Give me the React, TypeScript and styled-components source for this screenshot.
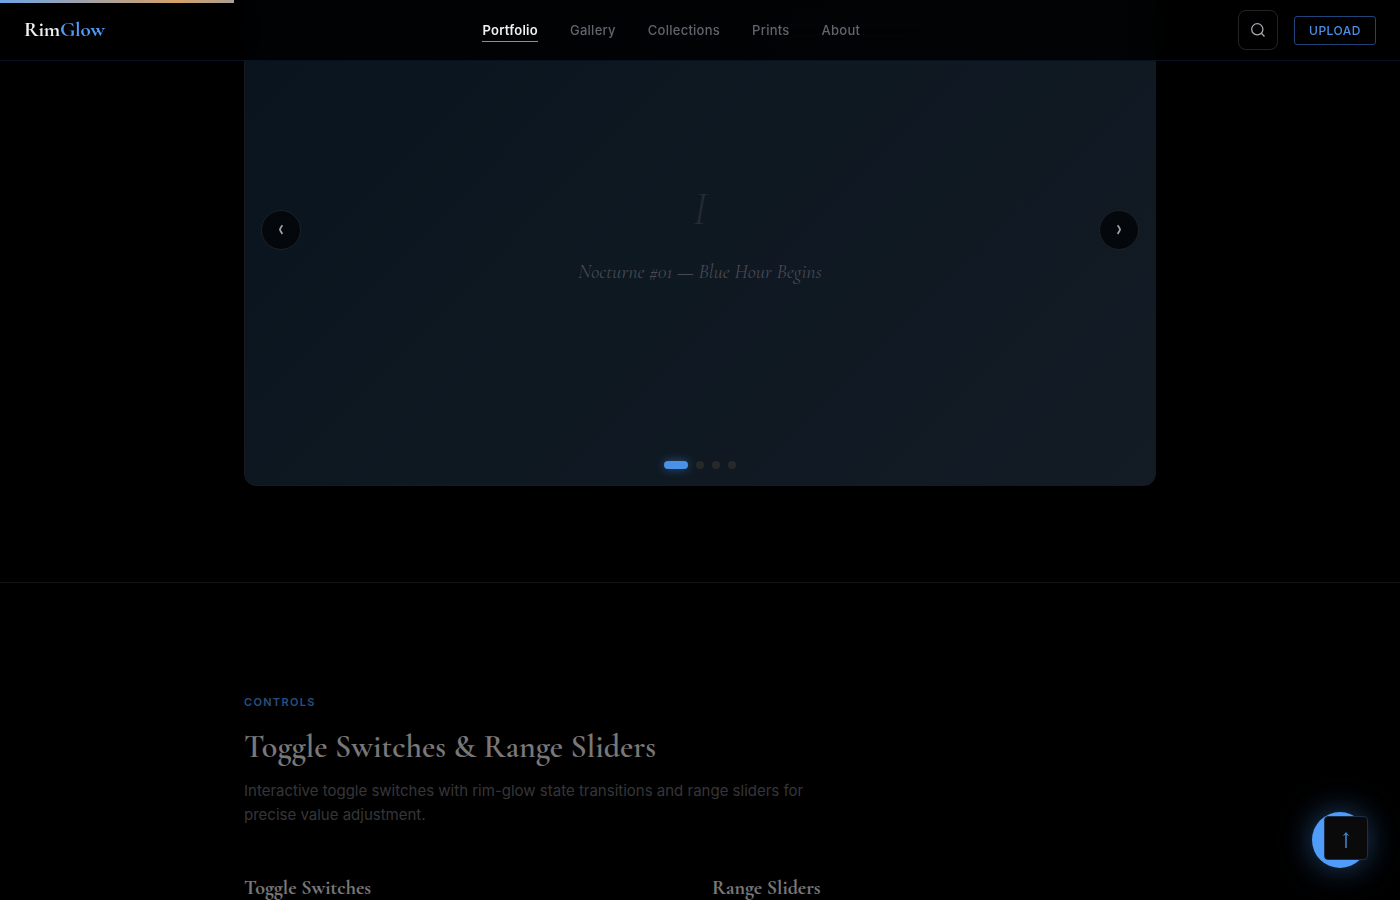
import React, { useState } from "react";
import styled, { createGlobalStyle } from "styled-components";

const serif = `"Cormorant Garamond", "Liberation Serif", serif`;
const blue = "#4f9cf9";

const GlobalStyle = createGlobalStyle`
  *, *::before, *::after { box-sizing: border-box; }
  body {
    margin: 0;
    background: #000;
    color: #f0f0f0;
    font-family: Inter, sans-serif;
    -webkit-font-smoothing: antialiased;
  }
  h2, h3, p { margin: 0; }
  button { font-family: inherit; padding: 0; cursor: pointer; }
`;

const Progress = styled.div`
  position: fixed;
  top: 0;
  left: 0;
  z-index: 20;
  width: 16.7%;
  height: 3px;
  background: linear-gradient(90deg, #6ea4e6, #d4a068 75%, #aaa094);
`;

const Header = styled.header`
  position: fixed;
  top: 0;
  left: 0;
  right: 0;
  z-index: 10;
  display: flex;
  align-items: center;
  justify-content: space-between;
  height: 61px;
  padding: 0 24px;
  background: rgba(0, 0, 0, 0.88);
  backdrop-filter: blur(20px);
  border-bottom: 1px solid #07111f;
`;

const Logo = styled.a`
  font-family: ${serif};
  font-size: 21px;
  font-weight: 700;
  line-height: 28px;
  letter-spacing: -0.01em;
  color: #f0f0f0;
  text-decoration: none;
  span { color: ${blue}; }
`;

const Nav = styled.nav`
  display: flex;
  gap: 32px;
`;

const NavLink = styled.a<{ $active?: boolean }>`
  padding: 4px 0 3px;
  border-bottom: 1px solid ${(p) => (p.$active ? blue : "transparent")};
  font-size: 13px;
  line-height: 16px;
  font-weight: ${(p) => (p.$active ? 600 : 500)};
  letter-spacing: 0.02em;
  color: ${(p) => (p.$active ? "#f0f0f0" : "#63636b")};
  text-decoration: none;
`;

const Actions = styled.div`
  display: flex;
  align-items: center;
  gap: 16px;
`;

const SearchButton = styled.button`
  display: grid;
  place-items: center;
  width: 40px;
  height: 40px;
  border: 1px solid #242424;
  border-radius: 8px;
  background: transparent;
  color: #a8a8b0;
`;

const UploadButton = styled.button`
  width: 82px;
  height: 29px;
  border: 1px solid #204478;
  border-radius: 3px;
  background: transparent;
  color: #4a90e8;
  font-size: 12px;
  font-weight: 500;
  letter-spacing: 0.04em;
`;

const Section = styled.section<{ $first?: boolean }>`
  padding: ${(p) => (p.$first ? "0 24px 96px" : "110px 24px 0")};
  margin-top: ${(p) => (p.$first ? "-27px" : "0")};
  border-bottom: ${(p) => (p.$first ? "1px solid #141416" : "none")};
`;

const Container = styled.div<{ $faded?: boolean }>`
  max-width: 912px;
  margin: 0 auto;
  opacity: ${(p) => (p.$faded ? 0.5 : 1)};
`;

const Carousel = styled.div`
  position: relative;
  display: flex;
  flex-direction: column;
  align-items: center;
  justify-content: center;
  aspect-ratio: 16 / 9;
  border: 1px solid #171a1d;
  border-radius: 12px;
  background: linear-gradient(135deg, #09131e 0%, #0e1821 45%, #131b25 100%);
`;

const Numeral = styled.div`
  font-family: ${serif};
  font-size: 48px;
  font-style: italic;
  font-weight: 300;
  line-height: 74px;
  color: #252a34;
`;

const Caption = styled.p`
  margin-top: 10px;
  font-family: ${serif};
  font-size: 20px;
  font-style: italic;
  line-height: 32px;
  color: #474852;
`;

const Arrow = styled.button<{ $side: "left" | "right" }>`
  position: absolute;
  top: 50%;
  ${(p) => p.$side}: 16px;
  display: grid;
  place-items: center;
  transform: translateY(-50%);
  width: 40px;
  height: 40px;
  border: 1px solid #1e2124;
  border-radius: 50%;
  background: #04080d;
  color: #a0a0a8;
`;

const Dots = styled.div`
  position: absolute;
  left: 0;
  right: 0;
  bottom: 16px;
  display: flex;
  justify-content: center;
  gap: 8px;
`;

const Dot = styled.button<{ $active: boolean }>`
  width: ${(p) => (p.$active ? 24 : 8)}px;
  height: 8px;
  border: 0;
  border-radius: 4px;
  background: ${(p) => (p.$active ? "#4a92e8" : "#282828")};
  box-shadow: ${(p) => (p.$active ? "0 0 10px rgba(79, 156, 249, 0.45)" : "none")};
`;

const Eyebrow = styled.p`
  font-size: 11px;
  font-weight: 600;
  line-height: 18px;
  letter-spacing: 0.12em;
  text-transform: uppercase;
  color: ${blue};
`;

const Title = styled.h2`
  margin-top: 16px;
  font-family: ${serif};
  font-size: 32px;
  font-weight: 600;
  line-height: 40px;
  color: #f0f0f0;
`;

const Lead = styled.p`
  max-width: 560px;
  margin-top: 12px;
  font-size: 15px;
  line-height: 24px;
  color: #6b6b73;
`;

const Columns = styled.div`
  display: grid;
  grid-template-columns: 1fr 1fr;
  gap: 24px;
  margin-top: 48px;
`;

const ColumnTitle = styled.h3`
  font-family: ${serif};
  font-size: 20px;
  font-weight: 700;
  line-height: 26px;
  color: #f0f0f0;
`;

const FloatingAction = styled.button`
  position: fixed;
  right: 32px;
  bottom: 32px;
  width: 56px;
  height: 56px;
  border: 0;
  border-radius: 50%;
  background: ${blue};
  box-shadow: 0 0 30px rgba(79, 156, 249, 0.4), 0 0 60px rgba(79, 156, 249, 0.1);
`;

const BackToTop = styled.button`
  position: fixed;
  right: 32px;
  bottom: 40px;
  display: grid;
  place-items: center;
  width: 44px;
  height: 44px;
  border: 1px solid #1b3048;
  border-radius: 4px;
  background: #0a0a0a;
  color: #3f7fca;
`;

const Chevron = ({ d }: { d: string }) => (
  <svg width="6" height="12" viewBox="0 0 6 12" fill="none" stroke="currentColor" strokeWidth="1.8">
    <path d={d} />
  </svg>
);

const links = ["Portfolio", "Gallery", "Collections", "Prints", "About"];
const slides = [
  { numeral: "I", caption: "Nocturne #01 — Blue Hour Begins" },
  { numeral: "II", caption: "Nocturne #02" },
  { numeral: "III", caption: "Nocturne #03" },
  { numeral: "IV", caption: "Nocturne #04" },
];

export default function App() {
  const [current, setCurrent] = useState(0);
  const step = (by: number) =>
    setCurrent((current + by + slides.length) % slides.length);

  return (
    <>
      <GlobalStyle />
      <Progress />
      <Header>
        <Logo href="#">Rim<span>Glow</span></Logo>
        <Nav>
          {links.map((label, i) => (
            <NavLink key={label} href="#" $active={i === 0}>{label}</NavLink>
          ))}
        </Nav>
        <Actions>
          <SearchButton aria-label="Search">
            <svg width="16" height="16" viewBox="0 0 16 16" fill="none" stroke="currentColor" strokeWidth="1.3">
              <circle cx="7.3" cy="7.3" r="5.6" />
              <path d="M11.3 11.3L14.5 14.5" />
            </svg>
          </SearchButton>
          <UploadButton>UPLOAD</UploadButton>
        </Actions>
      </Header>
      <main>
        <Section $first>
          <Container>
            <Carousel>
              <Numeral>{slides[current].numeral}</Numeral>
              <Caption>{slides[current].caption}</Caption>
              <Arrow $side="left" aria-label="Previous slide" onClick={() => step(-1)}>
                <Chevron d="M4.4 1.3Q2.6 3.6 1.9 5.5Q2.6 7.6 4.4 9.9" />
              </Arrow>
              <Arrow $side="right" aria-label="Next slide" onClick={() => step(1)}>
                <Chevron d="M1.6 1.3Q3.4 3.6 4.1 5.5Q3.4 7.6 1.6 9.9" />
              </Arrow>
              <Dots>
                {slides.map((slide, i) => (
                  <Dot
                    key={slide.numeral}
                    $active={i === current}
                    aria-label={`Slide ${i + 1}`}
                    onClick={() => setCurrent(i)}
                  />
                ))}
              </Dots>
            </Carousel>
          </Container>
        </Section>
        <Section>
          <Container $faded>
            <Eyebrow>Controls</Eyebrow>
            <Title>Toggle Switches &amp; Range Sliders</Title>
            <Lead>
              Interactive toggle switches with rim-glow state transitions and range
              sliders for precise value adjustment.
            </Lead>
            <Columns>
              <ColumnTitle>Toggle Switches</ColumnTitle>
              <ColumnTitle>Range Sliders</ColumnTitle>
            </Columns>
          </Container>
        </Section>
      </main>
      <FloatingAction aria-label="Quick action" />
      <BackToTop aria-label="Back to top">
        <svg width="16" height="24" viewBox="0 0 16 24" fill="none" stroke="currentColor" strokeWidth="1.6">
          <path d="M8 22V8" />
          <path d="M8 6L11.5 10.2Q9.5 9 8 9Q6.5 9 4.5 10.2Z" fill="currentColor" stroke="none" />
        </svg>
      </BackToTop>
    </>
  );
}
